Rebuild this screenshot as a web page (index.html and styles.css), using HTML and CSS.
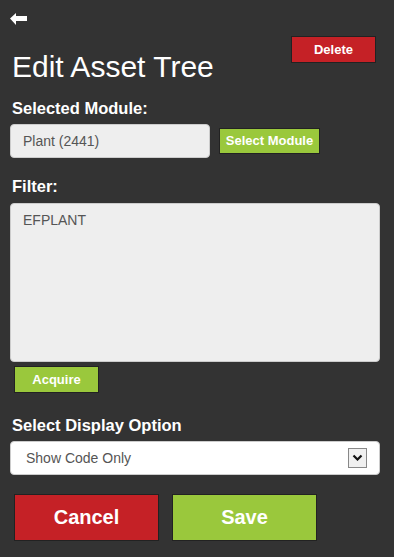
FILE: index.html
```
<!DOCTYPE html>
<html>
<head>
<meta charset="utf-8">
<link rel="stylesheet" href="styles.css">
</head>
<body>
<div class="page">
  <svg class="back" width="18" height="12" viewBox="0 0 18 12"><polygon points="0,5.5 6,0 6,3 17,3 17,8 6,8 6,12" fill="#fff"/></svg>
  <div class="top-row">
    <h1 class="title">Edit Asset Tree</h1>
    <button class="btn btn-red btn-delete">Delete</button>
  </div>
  <div class="label label-module">Selected Module:</div>
  <div class="module-row">
    <div class="input">Plant (2441)</div>
    <button class="btn btn-green btn-select">Select Module</button>
  </div>
  <div class="label label-filter">Filter:</div>
  <div class="textarea">EFPLANT</div>
  <button class="btn btn-green btn-acquire">Acquire</button>
  <div class="label label-display">Select Display Option</div>
  <div class="select">
    <span>Show Code Only</span>
    <span class="caret"><svg width="11" height="7" viewBox="0 0 11 7"><polyline points="1.5,1.5 5.5,5.5 9.5,1.5" fill="none" stroke="#111" stroke-width="2.2"/></svg></span>
  </div>
  <div class="actions">
    <button class="btn btn-red btn-big">Cancel</button>
    <button class="btn btn-green btn-big">Save</button>
  </div>
</div>
</body>
</html>
```
FILE: styles.css
```
* { box-sizing: border-box; }
html, body { margin: 0; padding: 0; background: #333333; }
body { font-family: "Liberation Sans", Arial, sans-serif; color: #fff; }
.page { width: 394px; height: 557px; padding: 0 14px 0 10px; display: flex; flex-direction: column; align-items: flex-start; }
.back { display: block; margin-top: 13px; margin-left: 0; }
.top-row { width: 100%; display: flex; justify-content: space-between; align-items: flex-start; }
.title { margin: 25px 0 0 2px; font-size: 30px; line-height: 34px; font-weight: normal; color: #fff; }
.btn { font-family: "Liberation Sans", Arial, sans-serif; font-weight: bold; color: #fff; border: 1px solid #222; padding: 0; cursor: pointer; }
.btn-red { background: #c52126; }
.btn-green { background: #9ac83c; }
.btn-delete { margin-top: 11px; margin-right: 4px; width: 85px; height: 27px; font-size: 13px; }
.label { font-size: 16.5px; line-height: 18px; font-weight: bold; margin-left: 2px; }
.label-module { margin-top: 14.5px; }
.module-row { margin-top: 7px; display: flex; align-items: center; gap: 9px; }
.input { width: 200px; height: 34px; background: #eeeeee; border: 1px solid #ccc; border-radius: 4px; color: #555; font-size: 14px; line-height: 32px; padding-left: 12px; }
.btn-select { width: 101px; height: 26px; font-size: 13px; }
.label-filter { margin-top: 19.5px; }
.textarea { margin-top: 7.5px; width: 370px; height: 159px; background: #eeeeee; border: 1px solid #ccc; border-radius: 4px; color: #555; font-size: 14px; line-height: 16px; padding: 8px 12px; }
.btn-acquire { margin-top: 4px; margin-left: 4px; width: 85px; height: 27px; font-size: 13px; }
.label-display { margin-top: 23.5px; }
.select { margin-top: 6.5px; width: 370px; height: 34px; background: #fff; border: 1px solid #ccc; border-radius: 4px; color: #555; font-size: 14px; display: flex; align-items: center; justify-content: space-between; padding: 0 12px 0 15px; }
.caret { width: 19px; height: 20px; border: 1px solid #888; background: #f0f0f0; display: flex; align-items: center; justify-content: center; }
.actions { margin-top: 19px; margin-left: 4px; display: flex; gap: 13px; }
.btn-big { width: 145px; height: 47px; font-size: 20px; }
```
